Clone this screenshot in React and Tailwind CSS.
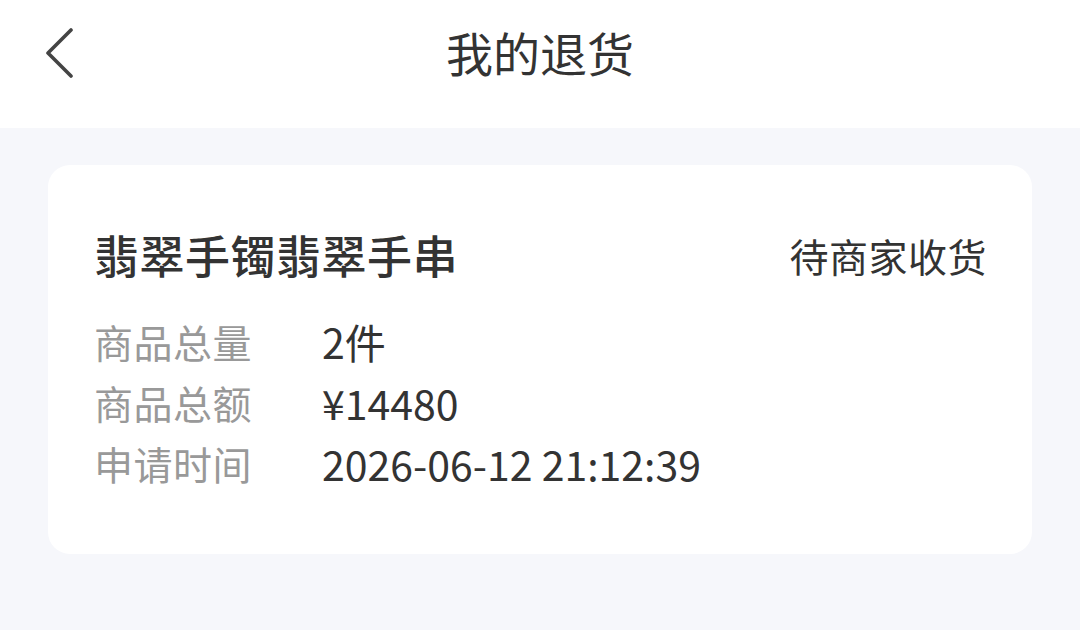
const rows = [
  { label: "商品总量", value: "2件" },
  { label: "商品总额", value: "¥14480" },
  { label: "申请时间", value: "2026-06-12 21:12:39" },
];

export default function App() {
  return (
    <div
      className="w-[1080px] h-[630px] bg-[#f6f7fb] overflow-hidden"
      style={{ fontFamily: '"Noto Sans CJK SC", "Noto Sans", sans-serif' }}
    >
      {/* Header */}
      <div className="relative h-[128px] bg-white flex items-start justify-center">
        <button className="absolute left-[39px] top-[24px] w-[40px] h-[56px] flex items-center justify-center">
          <svg width="34" height="52" viewBox="0 0 34 52" fill="none">
            <path
              d="M29 4 L6 27 L29 50"
              stroke="#444"
              strokeWidth="3.6"
              strokeLinecap="round"
              strokeLinejoin="round"
            />
          </svg>
        </button>
        <h1 className="mt-[22px] text-[47px] leading-[60px] text-[#333] font-normal">
          我的退货
        </h1>
      </div>

      {/* Card */}
      <div className="mx-[48px] mt-[37px] bg-white rounded-[22px] pl-[46px] pr-[45px] pt-[60px] pb-[60px]">
        <div className="flex items-center justify-between h-[60px]">
          <span className="text-[45px] text-[#333] font-medium leading-[60px] tracking-[0.5px]">
            翡翠手镯翡翠手串
          </span>
          <span className="text-[39px] text-[#333] leading-[60px] tracking-[0.5px]">待商家收货</span>
        </div>
        <div className="mt-[26px] flex flex-col">
          {rows.map((r) => (
            <div key={r.label} className="flex items-center h-[61px]">
              <span className="w-[228px] text-[39px] text-[#999] leading-[61px] tracking-[0.5px]">{r.label}</span>
              <span className="text-[41px] text-[#333] leading-[61px]">{r.value}</span>
            </div>
          ))}
        </div>
      </div>
    </div>
  );
}
